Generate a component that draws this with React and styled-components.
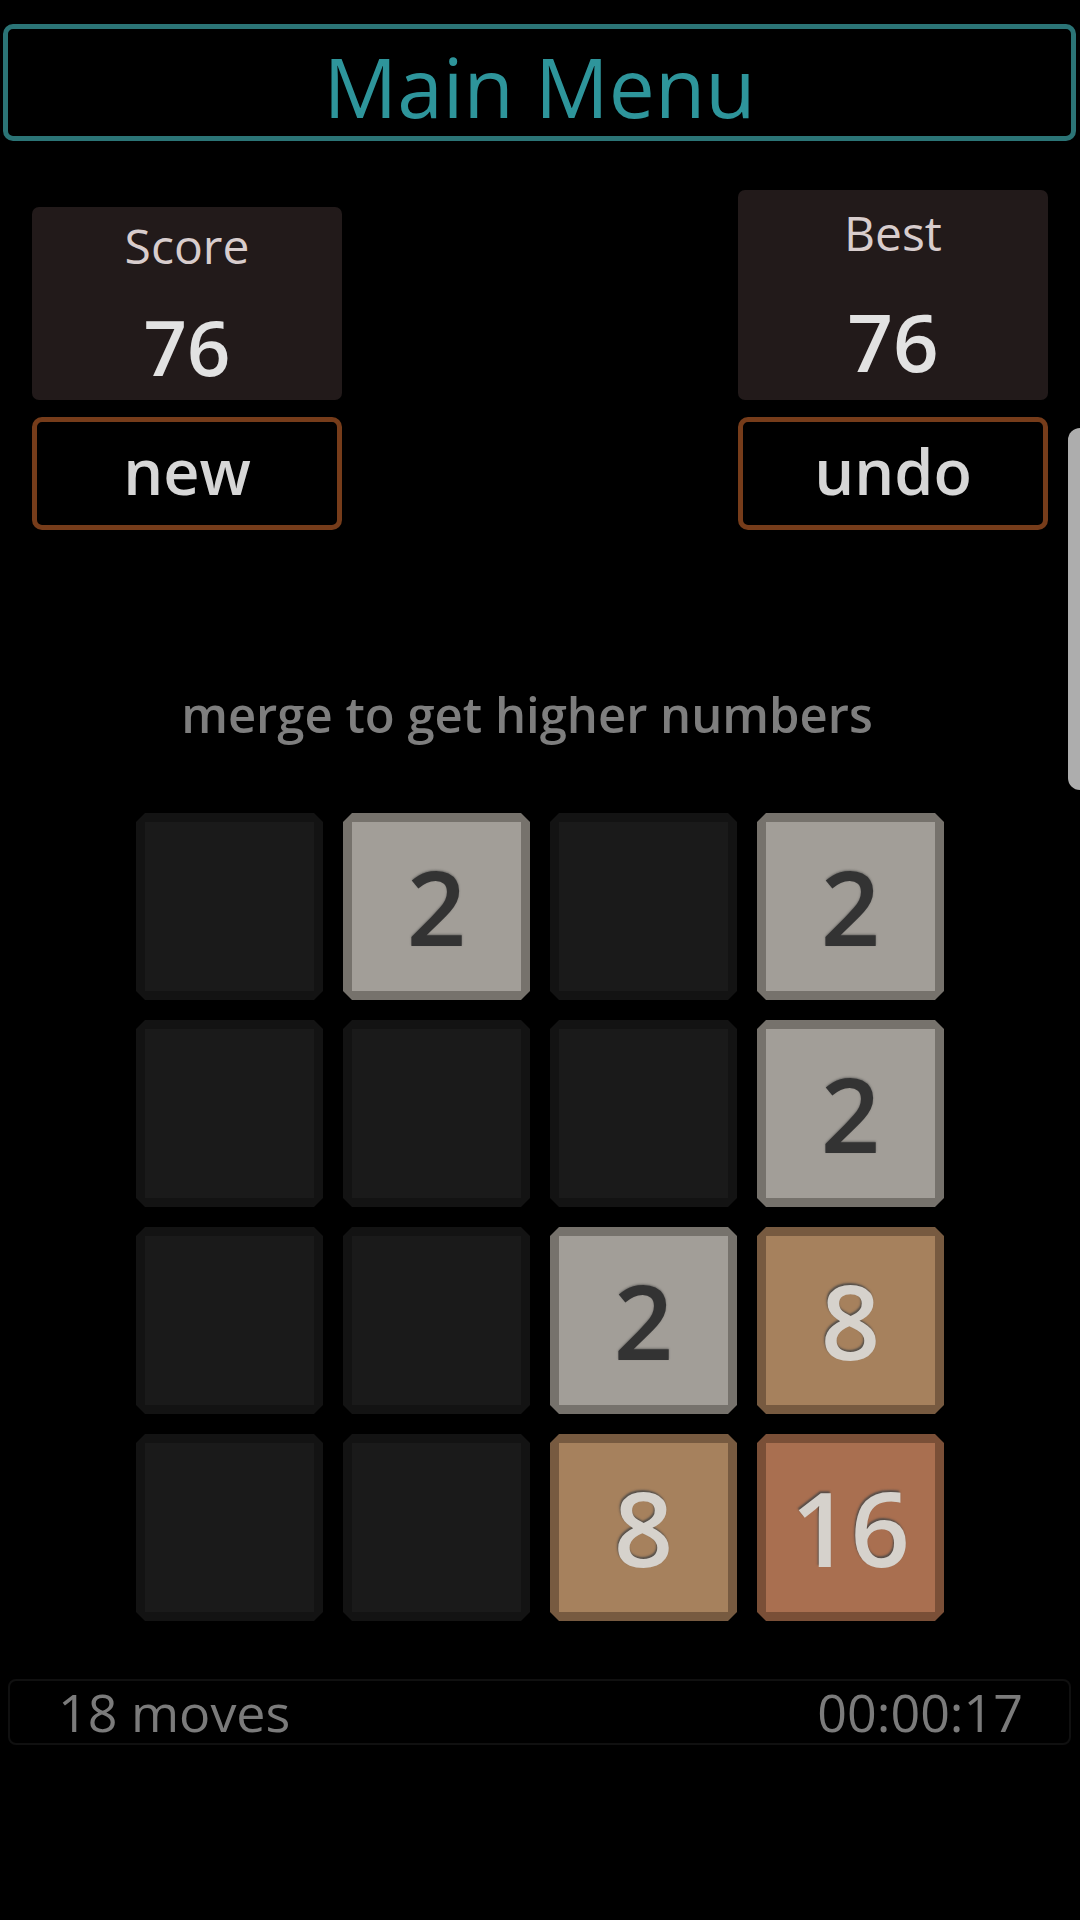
import React from "react";
import styled, { createGlobalStyle } from "styled-components";

const GlobalStyle = createGlobalStyle`
  html, body {
    margin: 0;
    padding: 0;
    background: #000;
  }
  body {
    font-family: "Open Sans", "Noto Sans", sans-serif;
    width: 1080px;
    min-height: 1920px;
    overflow: hidden;
  }
`;

const Page = styled.div`
  position: relative;
  width: 1080px;
  height: 1920px;
  background: #000;
  display: flex;
  flex-direction: column;
`;

const MenuHeader = styled.div`
  margin: 24px 4px 0 3px;
  height: 117px;
  box-sizing: border-box;
  border: 5px solid #2b7476;
  border-radius: 10px;
  display: flex;
  align-items: center;
  justify-content: center;
  padding-top: 6px;
  color: #2e959b;
  font-size: 82px;
  font-weight: 400;
  line-height: 1;
`;

const StatsRow = styled.div`
  margin-top: 49px;
  padding: 0 32px;
  display: flex;
  justify-content: space-between;
  align-items: flex-end;
`;

const StatColumn = styled.div`
  width: 310px;
  display: flex;
  flex-direction: column;
  gap: 17px;
`;

const StatBox = styled.div`
  height: ${(p) => p.$height}px;
  box-sizing: border-box;
  padding-top: ${(p) => p.$padTop}px;
  background: #221a1a;
  border-radius: 7px;
  display: flex;
  flex-direction: column;
  align-items: center;
  gap: ${(p) => p.$gap}px;
`;

const StatLabel = styled.div`
  font-size: 48px;
  line-height: 1;
  font-weight: 400;
  color: #d8cdcd;
`;

const StatValue = styled.div`
  font-size: ${(p) => p.$size}px;
  line-height: 1;
  font-weight: 600;
  color: #e2e2e2;
`;

const ActionButton = styled.button`
  height: 113px;
  box-sizing: border-box;
  border: 5px solid #763c1a;
  border-radius: 10px;
  background: #000;
  color: #d6d6d6;
  font-family: "Open Sans", "Noto Sans", sans-serif;
  font-size: 63px;
  font-weight: 600;
  line-height: 1;
  padding: 0 0 6px 0;
  display: flex;
  align-items: center;
  justify-content: center;
`;

const Hint = styled.div`
  margin-top: 150px;
  padding-right: 26px;
  text-align: center;
  font-size: 49px;
  line-height: 68px;
  font-weight: 600;
  color: #7e7e7e;
`;

const Board = styled.div`
  margin: 65px auto 0;
  display: grid;
  grid-template-columns: repeat(4, 187px);
  grid-auto-rows: 187px;
  gap: 20px;
`;

const TILE_COLORS = {
  0: { band: "#131313", face: "#1a1a1a", text: "transparent" },
  2: { band: "#76726c", face: "#a29e98", text: "#333333" },
  8: { band: "#775a40", face: "#a6815d", text: "#d6d2cc" },
  16: { band: "#7a4f37", face: "#a96f50", text: "#d6d2cc" },
};

const TileFrame = styled.div`
  box-sizing: border-box;
  padding: 9px;
  background: ${(p) => TILE_COLORS[p.$value].band};
  clip-path: polygon(
    9px 0, calc(100% - 9px) 0, 100% 9px, 100% calc(100% - 9px),
    calc(100% - 9px) 100%, 9px 100%, 0 calc(100% - 9px), 0 9px
  );
  display: flex;
`;

const TileFace = styled.div`
  flex: 1;
  background: ${(p) => TILE_COLORS[p.$value].face};
  display: flex;
  align-items: center;
  justify-content: center;
  color: ${(p) => TILE_COLORS[p.$value].text};
  font-size: 104px;
  font-weight: 600;
  line-height: 1;
  padding-bottom: 2px;
  text-shadow: ${(p) =>
    p.$value >= 8
      ? "-1px -2px 2px rgba(70, 70, 70, 0.85)"
      : "0 -1px 2px rgba(60, 60, 60, 0.5)"};
`;

const StatusBar = styled.div`
  margin: 58px 9px 0 8px;
  height: 66px;
  box-sizing: border-box;
  border: 2px solid #101010;
  border-radius: 8px;
  display: flex;
  align-items: center;
  justify-content: space-between;
  padding: 0 46px 0 48px;
  font-size: 52px;
  font-weight: 500;
  line-height: 1;
  color: #7b7b7b;
`;

const ScrollThumb = styled.div`
  position: absolute;
  top: 428px;
  right: 0;
  width: 12px;
  height: 362px;
  background: #adadad;
  border-radius: 12px 0 0 12px;
`;

const board = [
  [0, 2, 0, 2],
  [0, 0, 0, 2],
  [0, 0, 2, 8],
  [0, 0, 8, 16],
];

export default function App() {
  return (
    <Page>
      <GlobalStyle />
      <MenuHeader>Main Menu</MenuHeader>
      <StatsRow>
        <StatColumn>
          <StatBox $height={193} $padTop={15} $gap={39}>
            <StatLabel>Score</StatLabel>
            <StatValue $size={76}>76</StatValue>
          </StatBox>
          <ActionButton>new</ActionButton>
        </StatColumn>
        <StatColumn>
          <StatBox $height={210} $padTop={19} $gap={44}>
            <StatLabel>Best</StatLabel>
            <StatValue $size={80}>76</StatValue>
          </StatBox>
          <ActionButton>undo</ActionButton>
        </StatColumn>
      </StatsRow>
      <Hint>merge to get higher numbers</Hint>
      <Board>
        {board.flat().map((v, i) => (
          <TileFrame key={i} $value={v}>
            <TileFace $value={v}>{v ? v : ""}</TileFace>
          </TileFrame>
        ))}
      </Board>
      <StatusBar>
        <span>18 moves</span>
        <span>00:00:17</span>
      </StatusBar>
      <ScrollThumb />
    </Page>
  );
}
